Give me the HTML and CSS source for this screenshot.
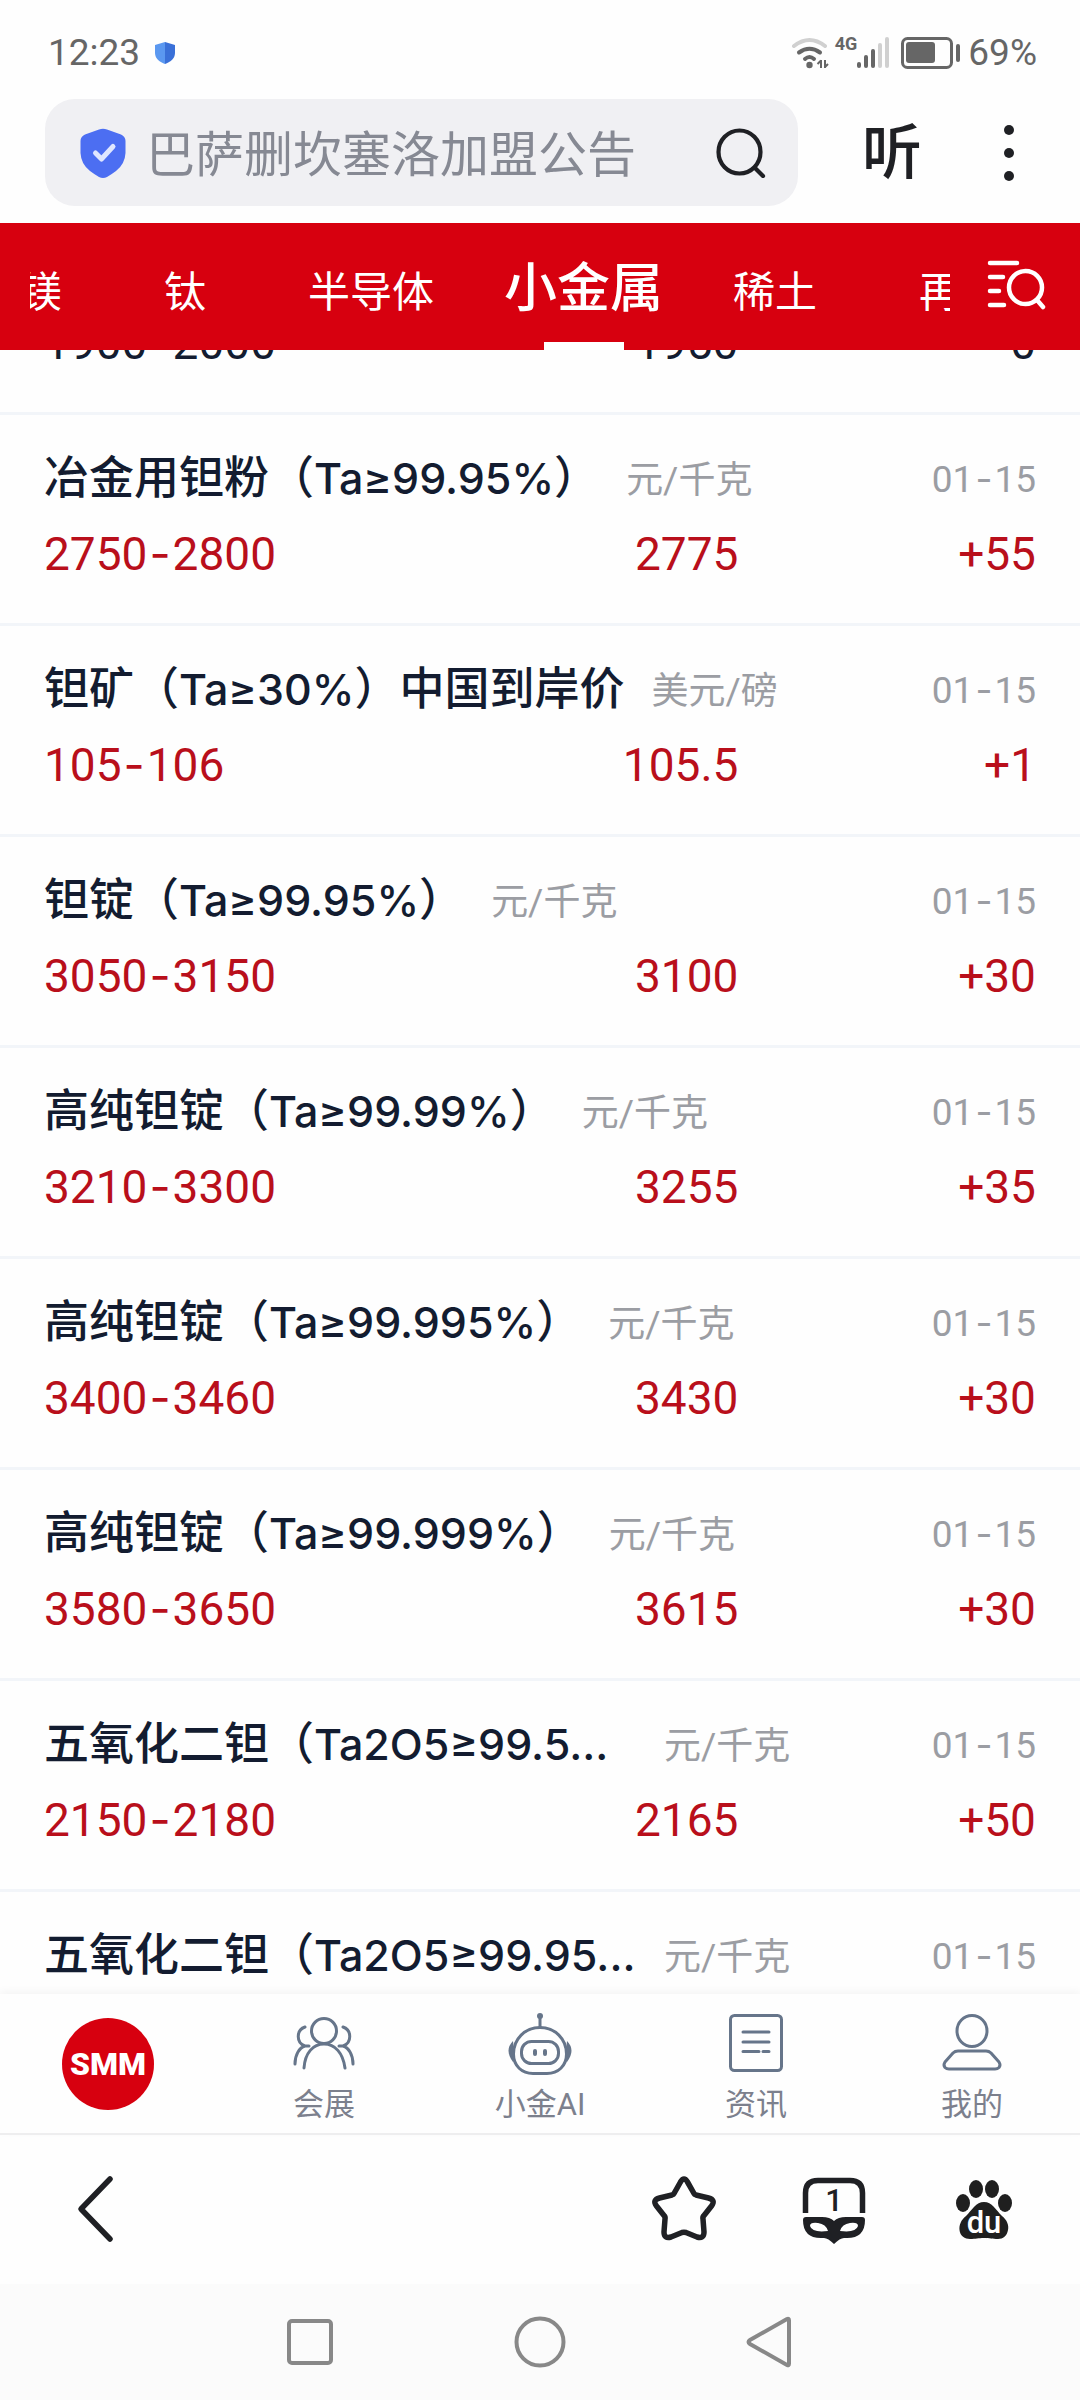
FILE: index.html
```html
<!DOCTYPE html>
<html lang="zh-CN">
<head>
<meta charset="utf-8">
<meta name="viewport" content="width=device-width, initial-scale=1">
<title>小金属 - SMM</title>
<link rel="stylesheet" href="styles.css">
</head>
<body>
<div class="app">
  <header>
    <div class="status">
      <span>12:23</span>
      <svg class="status-shield" width="22" height="24" viewBox="0 0 22 24" aria-hidden="true"><path d="M11 1L1 4V12C1 18 6 21 11 23Z" fill="#5b98f0"/><path d="M11 1L21 4V12C21 18 16 21 11 23Z" fill="#3a70d8"/></svg>
      <div class="status-right">
        <svg width="38" height="32" viewBox="0 0 38 32" fill="none" stroke-linecap="round" stroke-width="4" aria-hidden="true"><path d="M3 9Q18.500 -3 34 9" stroke="#d0d0d0"/><path d="M8 15.500Q18.500 8 29 15.500M14 22Q18.500 18 23 22" stroke="#666"/><circle cx="18.500" cy="28" r="3.200" fill="#666"/><path d="M30 23V31M26.500 27L30 23.500M34 23V31M34 30L37 27" stroke="#666" stroke-width="2" stroke-linecap="butt"/></svg>
        <span class="net">4G</span>
        <svg width="33" height="32" viewBox="0 0 33 32" aria-hidden="true"><g fill="#666"><rect x="0" y="25" width="4" height="6" rx="2"/><rect x="7" y="18" width="4" height="13" rx="2"/><rect x="14" y="12" width="4" height="19" rx="2"/></g><g fill="#d0d0d0"><rect x="21" y="6" width="4" height="25" rx="2"/><rect x="28" y="0" width="4" height="31" rx="2"/></g></svg>
        <svg class="battery" width="62" height="34" viewBox="0 0 62 34" aria-hidden="true"><rect x="2.500" y="2.500" width="49" height="29" rx="5" fill="none" stroke="#666" stroke-width="3"/><rect x="6" y="6" width="29" height="21" rx="3" fill="#666"/><rect x="56" y="8" width="4" height="18" rx="2" fill="#666"/></svg>
        <span>69%</span>
      </div>
    </div>
    <form class="toolbar" role="search">
      <label class="search">
        <svg width="46" height="50" viewBox="0 0 46 50" aria-hidden="true"><path d="M19 1.500Q23 0 27 1.500L41 6.500Q45.500 8.500 45.500 13V25Q45 36 36 43Q32 46 27 49Q23 51 19 49Q14 46 10 43Q1 36 .5 25V13Q.5 8.500 5 6.500Z" fill="#4c6ef2"/><path d="M15.500 25L21.500 31L33 18.500" fill="none" stroke="#dfe6ff" stroke-width="5" stroke-linecap="round" stroke-linejoin="round"/></svg>
        <input class="search-input" type="text" placeholder="巴萨删坎塞洛加盟公告" aria-label="搜索">
        <svg width="50" height="50" viewBox="0 0 50 50" fill="none" stroke="#1f2024" stroke-width="4.200" stroke-linecap="round" aria-hidden="true"><ellipse cx="23.500" cy="24" rx="21" ry="21.500"/><path d="M39 40L47 48"/></svg>
      </label>
      <button class="listen" type="button">听</button>
      <button class="more" type="button" aria-label="更多"><svg width="24" height="60" viewBox="0 0 24 60" fill="#1f2024"><circle cx="12" cy="7" r="5"/><circle cx="12" cy="30" r="5"/><circle cx="12" cy="53" r="5"/></svg></button>
    </form>
    <nav class="tabs">
      <div class="tabs-view">
        <div class="tabs-track">
          <button class="tab">镁</button>
          <button class="tab">钛</button>
          <button class="tab">半导体</button>
          <button class="tab tab-active">小金属</button>
          <button class="tab">稀土</button>
          <button class="tab">再生</button>
        </div>
      </div>
      <button class="tabs-find" aria-label="查找品种"><svg width="60" height="52" viewBox="0 0 60 52" fill="none" stroke="#fff" stroke-width="4.500" stroke-linecap="round"><path d="M4 5H31M4 19H17M4 33H13M4 47H18"/><circle cx="39.500" cy="29.500" r="16.500"/><path d="M51 42L57 49"/></svg></button>
    </nav>
  </header>

  <main class="prices">
    <article class="row row-cut">
      <div class="quote"><span>1900<i class="dash">-</i>2000</span><span class="mean">1950</span><span class="change">0</span></div>
    </article>
    <article class="row row-up">
      <div class="head"><h2 class="name">冶金用钽粉（<span class="spec">Ta≥99.95%</span>）</h2><span class="unit">元/千克</span><time class="date">01<i class="dash">-</i>15</time></div>
      <div class="quote"><span>2750<i class="dash">-</i>2800</span><span class="mean">2775</span><span class="change">+55</span></div>
    </article>
    <article class="row row-up">
      <div class="head"><h2 class="name">钽矿（<span class="spec">Ta≥30%</span>）中国到岸价</h2><span class="unit">美元/磅</span><time class="date">01<i class="dash">-</i>15</time></div>
      <div class="quote"><span>105<i class="dash">-</i>106</span><span class="mean">105.5</span><span class="change">+1</span></div>
    </article>
    <article class="row row-up">
      <div class="head"><h2 class="name">钽锭（<span class="spec">Ta≥99.95%</span>）</h2><span class="unit">元/千克</span><time class="date">01<i class="dash">-</i>15</time></div>
      <div class="quote"><span>3050<i class="dash">-</i>3150</span><span class="mean">3100</span><span class="change">+30</span></div>
    </article>
    <article class="row row-up">
      <div class="head"><h2 class="name">高纯钽锭（<span class="spec">Ta≥99.99%</span>）</h2><span class="unit">元/千克</span><time class="date">01<i class="dash">-</i>15</time></div>
      <div class="quote"><span>3210<i class="dash">-</i>3300</span><span class="mean">3255</span><span class="change">+35</span></div>
    </article>
    <article class="row row-up">
      <div class="head"><h2 class="name">高纯钽锭（<span class="spec">Ta≥99.995%</span>）</h2><span class="unit">元/千克</span><time class="date">01<i class="dash">-</i>15</time></div>
      <div class="quote"><span>3400<i class="dash">-</i>3460</span><span class="mean">3430</span><span class="change">+30</span></div>
    </article>
    <article class="row row-up">
      <div class="head"><h2 class="name">高纯钽锭（<span class="spec">Ta≥99.999%</span>）</h2><span class="unit">元/千克</span><time class="date">01<i class="dash">-</i>15</time></div>
      <div class="quote"><span>3580<i class="dash">-</i>3650</span><span class="mean">3615</span><span class="change">+30</span></div>
    </article>
    <article class="row row-up">
      <div class="head"><h2 class="name name-long">五氧化二钽（<span class="spec">Ta2O5≥99.5...</span></h2><span class="unit">元/千克</span><time class="date">01<i class="dash">-</i>15</time></div>
      <div class="quote"><span>2150<i class="dash">-</i>2180</span><span class="mean">2165</span><span class="change">+50</span></div>
    </article>
    <article class="row row-up">
      <div class="head"><h2 class="name name-long">五氧化二钽（<span class="spec">Ta2O5≥99.95...</span></h2><span class="unit">元/千克</span><time class="date">01<i class="dash">-</i>15</time></div>
    </article>
  </main>

  <nav class="menu">
    <a class="menu-home" href="#home"><span class="logo">SMM</span></a>
    <a class="menu-item" href="#expo"><svg width="66" height="64" viewBox="0 0 66 64" class="line-icon"><circle cx="33" cy="19" r="12.500"/><path d="M13 56C14 41 22 32 33 32S52 41 54 56M14 15C5 18 5 31 14 34H18M14 34C8 36 4 43 4 52M52 15C61 18 61 31 52 34H48M52 34C58 36 62 43 62 52"/></svg>会展</a>
    <a class="menu-item" href="#ai"><svg width="66" height="64" viewBox="0 0 66 64" class="line-icon"><circle cx="33" cy="4" r="3" class="solid"/><path d="M33 6V15"/><path d="M33 15.500C18 15.500 6.500 27 6.500 42C6.500 54 15 61.500 26 61.500H40C51 61.500 59.500 54 59.500 42C59.500 27 48 15.500 33 15.500Z"/><rect x="14.500" y="29.500" width="37" height="22" rx="10"/><path d="M28 39V42M38 39V42" stroke-width="4"/><path class="solid" d="M6 29Q-3 38 6 50Q8 50 7 40ZM60 29Q69 38 60 50Q58 50 59 40Z"/></svg>小金AI</a>
    <a class="menu-item" href="#news"><svg width="66" height="64" viewBox="0 0 66 64" class="line-icon"><rect x="7.500" y="3.500" width="51" height="55" rx="4"/><path d="M20 20H46M20 30H46M20 39.500H36M40 39.500H46"/></svg>资讯</a>
    <a class="menu-item" href="#me"><svg width="66" height="64" viewBox="0 0 66 64" class="line-icon"><ellipse cx="33" cy="19" rx="15" ry="15.500"/><path d="M19 39H47Q50 39 52 41L60 50Q62 53 60 55.500Q58.500 57 56 57H10Q7.500 57 6 55.500Q4 53 6 50L14 41Q16 39 19 39Z"/></svg>我的</a>
  </nav>

  <nav class="browser">
    <button class="tool tool-back" aria-label="后退"><svg width="72" height="72" viewBox="0 0 72 72" fill="none" stroke="#1f2024" stroke-width="5.500" stroke-linecap="round" stroke-linejoin="round"><path d="M50 6L21 36L50 66"/></svg></button>
    <button class="tool" aria-label="收藏"><svg width="72" height="72" viewBox="0 0 72 72" fill="none" stroke="#1f2024" stroke-width="5.500" stroke-linejoin="round"><path d="M32.500 9Q36 3 39.500 9L46 20.500Q46.500 21.500 48 22L60.500 25Q68 27 63.500 33L56 42.500Q54.500 44 55 46L56 59Q56 66 49 64L38 59.500Q36 59 34 59.500L23 64Q16 66 16 59L17 46Q17.500 44 16 42.500L8.500 33Q4 27 11.500 25L24 22Q25.500 21.500 26 20.500Z"/></svg></button>
    <button class="tool" aria-label="窗口"><svg width="72" height="72" viewBox="0 0 72 72"><path d="M7.500 40V20Q7.500 7.500 20 7.500H52Q64.500 7.500 64.500 20V40" fill="none" stroke="#1f2024" stroke-width="5.500"/><path d="M5 47Q5 44 8 44H24Q32 44 36 48Q40 44 48 44H64Q67 44 67 47Q67 65 49 65H46Q42 65 36 71Q30 65 26 65H23Q5 65 5 47Z" fill="#1f2024"/><path d="M12 53Q12 49 20 50Q28 51 30 58Q14 60 12 53ZM60 53Q60 49 52 50Q44 51 42 58Q58 60 60 53Z" fill="#fff"/><text x="36" y="38" class="count">1</text></svg></button>
    <button class="tool" aria-label="百度"><svg width="72" height="72" viewBox="0 0 72 72"><g fill="#1f1f1f"><ellipse cx="28" cy="16" rx="7" ry="9"/><ellipse cx="44" cy="16" rx="7" ry="9"/><ellipse cx="15" cy="30" rx="7" ry="9"/><ellipse cx="57" cy="30" rx="7" ry="9"/><path d="M36 29C44 29 48 37 54 43C59 47 61 52 60 57C59 63 55 66 50 66C44 66 42 65 36 65S28 66 22 66C17 66 12 63 11.500 57C11 52 13 47 18 43C24 37 28 29 36 29Z"/></g><text x="36" y="60" class="du">du</text></svg></button>
  </nav>

  <nav class="system">
    <button aria-label="最近任务"><svg width="54" height="54" viewBox="0 0 54 54"><rect x="6" y="6" width="42" height="42" rx="3"/></svg></button>
    <button aria-label="主屏幕"><svg width="54" height="54" viewBox="0 0 54 54"><circle cx="27" cy="27" r="23.500"/></svg></button>
    <button aria-label="返回"><svg width="54" height="54" viewBox="0 0 54 54"><path d="M44 4Q46 3 46 5.500V48.500Q46 51 44 50L7 29Q4 27 7 25Z"/></svg></button>
  </nav>
</div>
</body>
</html>
```
FILE: styles.css
```css
* {
  box-sizing: border-box;
}

body {
  margin: 0;
  background: #fefefe;
  color: #131c30;
  font-family: Roboto, "Noto Sans CJK SC", sans-serif;
}

button {
  padding: 0;
  border: 0;
  background: none;
  color: inherit;
  font: inherit;
}

svg {
  display: block;
  flex: none;
}

.app {
  display: flex;
  flex-direction: column;
  height: 100vh;
}

/* status bar */
.status {
  display: flex;
  align-items: center;
  height: 99px;
  padding: 6px 43px 0 48px;
  color: #666;
  font-size: 37px;
}

.status-shield {
  margin-left: 14px;
}

.status-right {
  display: flex;
  align-items: center;
  margin-left: auto;
}

.net {
  align-self: flex-start;
  margin: 4px 0 0 6px;
  font: bold 18px/18px "Liberation Sans Narrow", Roboto, sans-serif;
}

.battery {
  margin: 0 6px 0 10px;
}

/* address bar */
.toolbar {
  display: flex;
  align-items: center;
  padding: 0 59px 17px 45px;
}

.search {
  display: flex;
  flex: 1;
  align-items: center;
  height: 107px;
  min-width: 0;
  padding: 0 32px 0 35px;
  border-radius: 30px;
  background: #f0f0f3;
}

.search-input {
  flex: 1;
  min-width: 0;
  padding: 0 0 3px;
  margin-left: 20px;
  border: 0;
  outline: 0;
  background: none;
  font: 49px/70px "Noto Sans CJK SC", sans-serif;
}

.search-input::placeholder {
  color: #868993;
  opacity: 1;
}

.listen {
  margin: 0 75px 0 64px;
  padding-top: 3px;
  color: #1f2024;
  font-size: 60px;
  font-weight: 500;
  line-height: 80px;
}

/* category tabs */
.tabs {
  display: flex;
  align-items: center;
  padding: 0 34px 0 30px;
  background: #d7000f;
  color: #fff;
}

.tabs-view {
  flex: 1;
  min-width: 0;
  overflow: hidden;
}

/* the strip is scrolled, so its first tab is cut */
.tabs-track {
  display: flex;
  align-items: baseline;
  gap: 102px;
  padding-top: 6px;
  margin-left: -10px;
}

.tab {
  flex: none;
  font-size: 42px;
  line-height: 60px;
}

.tab-active {
  position: relative;
  margin: 0 -32px;
  font-size: 53px;
  font-weight: 500;
  line-height: 121px;
}

.tab-active::after {
  content: "";
  position: absolute;
  bottom: 0;
  left: 50%;
  width: 80px;
  height: 8px;
  margin-left: -40px;
  background: #fff;
}

.tabs-find {
  margin: 0 0 6px 36px;
}

/* price list */
.prices {
  flex: 1;
  min-height: 0;
  overflow: hidden;
}

.row {
  display: flex;
  flex-direction: column;
  gap: 9px;
  padding: 31px 44px 36px;
  border-bottom: 3px solid #f2f5f9;
}

/* first visible row is partly scrolled under the tabs */
.row-cut {
  margin-top: -40px;
  padding-top: 0;
}

.head {
  display: flex;
  align-items: center;
  height: 66px;
}

.name {
  margin: 0;
  font-size: 45px;
  font-weight: 500;
  line-height: 66px;
  white-space: nowrap;
}

.name-long {
  width: 593px;
}

.spec {
  font-family: Inter, sans-serif;
  font-size: 43px;
  line-height: 1;
}

.unit,
.date {
  color: #9b9da3;
  font-size: 37px;
}

.unit {
  padding-bottom: 4px;
  margin-left: 27px;
}

.date {
  margin-left: auto;
}

.quote {
  display: grid;
  grid-template-columns: 4fr 3fr 3fr;
  font-size: 46px;
  line-height: 66px;
}

.row-up .quote {
  color: #b90f1b;
}

.mean,
.change {
  text-align: right;
}

.dash {
  padding: 0 2px;
  font-family: Inter, sans-serif;
  font-style: normal;
  line-height: 1;
}

/* site menu */
.menu {
  display: grid;
  grid-template-columns: repeat(5, 1fr);
  height: 141px;
  border-bottom: 2px solid #eeeeef;
  background: #fefefe;
  box-shadow: 0 -3px 8px rgba(0, 0, 0, 0.04);
}

.menu-home,
.menu-item {
  display: flex;
  flex-direction: column;
  align-items: center;
  justify-content: center;
  text-decoration: none;
}

.menu-item {
  gap: 7px;
  padding-top: 12px;
  color: #7c808d;
  font-size: 31px;
  line-height: 44px;
}

.line-icon {
  fill: none;
  stroke: #66758a;
  stroke-width: 3;
  stroke-linecap: round;
  stroke-linejoin: round;
}

.line-icon .solid {
  fill: #66758a;
  stroke: none;
}

.logo {
  width: 92px;
  height: 92px;
  border-radius: 50%;
  background: #d7000f;
  color: #fff;
  font-size: 32px;
  font-weight: 900;
  line-height: 92px;
  text-align: center;
}

/* browser controls */
.browser {
  display: flex;
  align-items: center;
  gap: 78px;
  height: 149px;
  padding: 0 60px 2px;
}

.tool-back {
  margin-right: auto;
}

.count {
  fill: #1f2024;
  font: 500 31px Roboto, sans-serif;
  text-anchor: middle;
}

.du {
  fill: #fff;
  font: 500 31px Roboto, sans-serif;
  text-anchor: middle;
}

/* system navigation */
.system {
  display: grid;
  grid-template-columns: repeat(3, 1fr);
  justify-items: center;
  align-items: center;
  height: 116px;
  padding: 0 18%;
  background: #fbfbfb;
}

.system svg {
  fill: none;
  stroke: #888;
  stroke-width: 4;
}
```
